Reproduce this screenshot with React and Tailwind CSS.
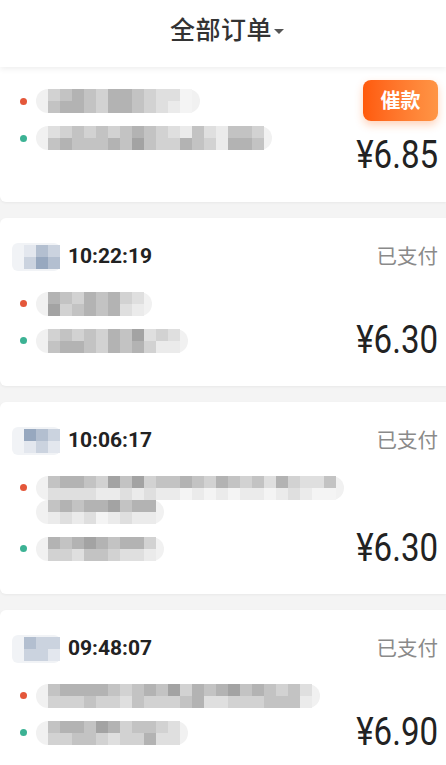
const shade = {
  a: "bg-[#a3a3a3]",
  b: "bg-[#b3b3b3]",
  c: "bg-[#c3c3c3]",
  d: "bg-[#d2d2d2]",
  e: "bg-[#dfdfdf]",
  f: "bg-[#ebebeb]",
  g: "bg-[#f4f4f4]",
  p: "bg-[#97a8bf]",
  q: "bg-[#b3bfd0]",
  r: "bg-[#cbd3df]",
  s: "bg-[#e3e7ee]",
};

/* MOSAIC (blurred text) */

function Mosaic({ rows }) {
  return (
    <div className="flex flex-col">
      {rows.map((row, i) => (
        <div key={i} className="flex">
          {row.split("").map((ch, j) => (
            <span key={j} className={`block w-3 h-3 ${shade[ch]}`} />
          ))}
        </div>
      ))}
    </div>
  );
}

function Pill({ lines }) {
  return (
    <div className="flex flex-col">
      {lines.map((rows, i) => (
        <div key={i} className="self-start rounded-full bg-[#f1f1f1] pl-3 pr-2">
          <Mosaic rows={rows} />
        </div>
      ))}
    </div>
  );
}

function DotRow({ color, lines }) {
  return (
    <div className="flex items-start pt-[6.5px] pb-[6.5px] pl-[20px]">
      <div className="h-6 flex items-center">
        <span className={`block w-[7px] h-[7px] rounded-full ${color}`} />
      </div>
      <div className="ml-[9px]">
        <Pill lines={lines} />
      </div>
    </div>
  );
}

function NameTag({ rows }) {
  return (
    <div className="rounded-md bg-[#f1f3f6] pl-3 py-[2px]">
      <Mosaic rows={rows} />
    </div>
  );
}

/* ORDER CARD */

function OrderCard({ name, time, from, to, price }) {
  return (
    <div className="bg-white rounded-l-md shadow-[0_1px_3px_rgba(0,0,0,0.05)] pt-[21px] pb-[27px] pr-2">
      <div className="h-9 flex items-center justify-between">
        <div className="flex items-center pl-3">
          <NameTag rows={name} />
          <span className="ml-2 text-[21px] font-bold text-[#222]">{time}</span>
        </div>
        <span className="text-[20.5px] text-[#8a8a8a]">已支付</span>
      </div>
      <div className="mt-[10px] flex justify-between items-end">
        <div className="min-w-0">
          <DotRow color="bg-[#e4573a]" lines={from} />
          <DotRow color="bg-[#3cb294]" lines={to} />
        </div>
        <Price value={price} />
      </div>
    </div>
  );
}

function Price({ value }) {
  return (
    <span className="block shrink-0 whitespace-nowrap text-[38px] leading-[37px] text-[#222] scale-x-87 origin-right">
      ¥{value}
    </span>
  );
}

export default function App() {
  return (
    <div
      className="w-full h-[765px] overflow-hidden bg-[#f4f4f4]"
      style={{ fontFamily: 'Roboto, "Noto Sans CJK SC", sans-serif' }}
    >
      {/* HEADER */}
      <div className="relative z-10 h-[67px] pb-[6px] pl-[8px] bg-white shadow-[0_2px_6px_rgba(0,0,0,0.07)] flex items-center justify-center">
        <span className="text-[25px] font-medium text-[#333] tracking-[0.5px]">全部订单</span>
        <span className="ml-[2px] mt-[2px] w-0 h-0 border-l-[5px] border-r-[5px] border-t-[5px] border-l-transparent border-r-transparent border-t-[#555]" />
      </div>

      <div className="flex flex-col gap-4">
        {/* FIRST CARD (scrolled under header) */}
        <div className="-mt-[47px] bg-white rounded-l-md shadow-[0_1px_3px_rgba(0,0,0,0.05)] pt-3 pb-[27px] pr-2">
          <div className="h-9 flex items-center pl-3">
            <NameTag rows={["rqs", "sqr"]} />
          </div>
          <div className="mt-3 flex justify-between">
            <div className="mt-[2.5px] min-w-0">
              <DotRow
                color="bg-[#e4573a]"
                lines={[["dcbcdbbcdeeg", "cbbcdbbcdefg"]]}
              />
              <DotRow
                color="bg-[#3cb294]"
                lines={[["edcdcdcbcdefcefccd", "cbcccbcacddbcdfbbc"]]}
              />
            </div>
            <div className="flex flex-col items-end">
              <button className="w-[75px] h-[41px] rounded-lg bg-gradient-to-r from-[#ff5a0a] to-[#ff9545] text-white text-[20px] font-bold shadow-[0_4px_8px_rgba(255,110,30,0.3)]">
                催款
              </button>
              <div className="mt-[14px] h-10 flex items-center">
                <Price value="6.85" />
              </div>
            </div>
          </div>
        </div>

        <OrderCard
          name={["sqr", "rpq"]}
          time="10:22:19"
          from={[["bcdbcbde", "adcbcbef"]]}
          to={[["dcdcdbcaede", "cbbcdbcbdff"]]}
          price="6.30"
        />

        <OrderCard
          name={["pqr", "srs"]}
          time="10:06:17"
          from={[
            ["cbbcdacadccbcdbcdcebdeec", "eeeeffefeffgfgfgffgfefgg"],
            ["cbcbbacbb", "fefegfeff"],
          ]}
          to={[["bcbabcbbd", "ddeccdeef"]]}
          price="6.30"
        />

        <OrderCard
          name={["qrr", "rrs"]}
          time="09:48:07"
          from={[["cbbbbcdcbcadbcbacbcdce", "dddcddecdddcbeedddcccf"]]}
          to={[["cbbcabdccde", "ddccdeddbee"]]}
          price="6.90"
        />
      </div>
    </div>
  );
}
